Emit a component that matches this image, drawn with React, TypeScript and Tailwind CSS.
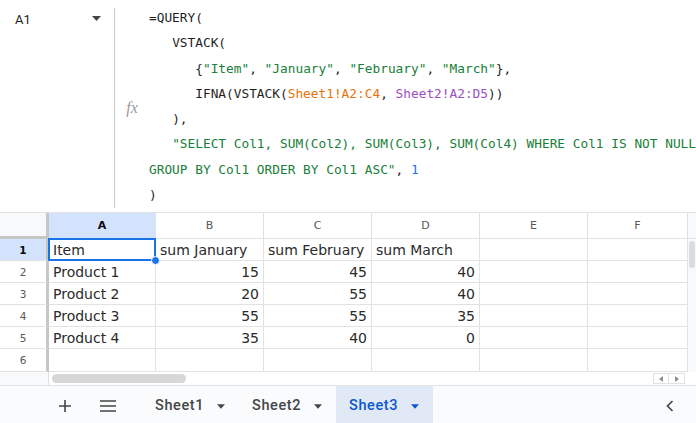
import React from "react";

const G = "text-[#188038]";
const O = "text-[#e8710a]";
const P = "text-[#9a4fc4]";
const B = "text-[#1a73e8]";

const cols = ["A", "B", "C", "D", "E", "F"];
const rows: (string | number)[][] = [
  ["Item", "sum January", "sum February", "sum March", "", ""],
  ["Product 1", 15, 45, 40, "", ""],
  ["Product 2", 20, 55, 40, "", ""],
  ["Product 3", 55, 55, 35, "", ""],
  ["Product 4", 35, 40, 0, "", ""],
  ["", "", "", "", "", ""],
];
const rowH = ["h-[22px]", "h-[22px]", "h-[22px]", "h-[22px]", "h-[22px]", "h-[23px]"];

function Caret({ className = "" }: { className?: string }) {
  return (
    <svg width="9" height="5" viewBox="0 0 9 5" className={className}>
      <path d="M0 0h9L4.5 5z" fill="currentColor" />
    </svg>
  );
}

function Tab({ name, active = false }: { name: string; active?: boolean }) {
  return (
    <div
      className={`w-[97px] flex items-center pl-[13px] gap-[11px] pt-[3px] ${
        active ? "bg-[#e1e9f7] text-[#0b57d0]" : "text-[#444746]"
      }`}
    >
      <span className="w-[51px] tracking-[0.6px]">{name}</span>
      <Caret className="w-[8px]" />
    </div>
  );
}

export default function App() {
  return (
    <div className="w-[696px] h-[423px] bg-white overflow-hidden flex flex-col select-none">
      {/* Formula bar */}
      <div className="h-[213px] flex border-b border-[#e1e3e1] shrink-0">
        <div className="w-[114px] flex items-start justify-between pl-[15px] pr-[13px] pt-[10px]">
          <span className="text-[13px] text-[#1f1f1f] font-['Roboto',sans-serif]">A1</span>
          <Caret className="text-[#444746] mt-[6px]" />
        </div>
        <div className="w-px bg-[#c7c7c7] mt-[8px] mb-[4px]" />
        <div className="w-[34px] flex items-center justify-center pt-[4px]">
          <span className="italic text-[16px] text-[#9a9a9a] font-['Liberation_Serif',serif]">fx</span>
        </div>
        <pre className="flex-1 pt-[5px] text-[12.8px] leading-[25.3px] text-[#1f1f1f] font-['DejaVu_Sans_Mono',monospace] whitespace-pre overflow-hidden">
          <div>=QUERY(</div>
          <div>{"   "}VSTACK(</div>
          <div>
            {"      "}
            <span>{"{"}</span>
            <span className={G}>"Item"</span>, <span className={G}>"January"</span>, <span className={G}>"February"</span>, <span className={G}>"March"</span>
            {"},"}
          </div>
          <div>
            {"      "}IFNA(VSTACK(<span className={O}>Sheet1!A2:C4</span>, <span className={P}>Sheet2!A2:D5</span>))
          </div>
          <div>{"   "}),</div>
          <div>
            {"   "}
            <span className={G}>"SELECT Col1, SUM(Col2), SUM(Col3), SUM(Col4) WHERE Col1 IS NOT NULL</span>
          </div>
          <div>
            <span className={G}>GROUP BY Col1 ORDER BY Col1 ASC"</span>, <span className={B}>1</span>
          </div>
          <div>)</div>
        </pre>
      </div>

      {/* Grid */}
      <div className="grid grid-cols-[49px_107px_108px_108px_108px_108px_100px_8px] font-['DejaVu_Sans',sans-serif]">
        {/* header row */}
        <div className="h-[26px] bg-[#f8f9fa] border-r-[3px] border-b-[3px] border-[#c4c7c5]" />
        {cols.map((c, i) => (
          <div
            key={c}
            className={`h-[26px] flex items-center justify-center pt-[1px] text-[11px] border-r border-b border-[#e1e1e1] ${
              i === 0 ? "bg-[#d3e3fd] text-[#0b0b0b] font-bold" : "bg-white text-[#575757]"
            }`}
          >
            {c}
          </div>
        ))}
        <div className="h-[26px] bg-[#f8f9fa] border-b border-[#e1e1e1]" />

        {rows.map((r, ri) => (
          <React.Fragment key={ri}>
            <div
              className={`${rowH[ri]} flex items-center justify-center pt-[2px] text-[10.5px] border-r-[3px] border-b border-r-[#c4c7c5] border-b-[#e1e1e1] ${
                ri === 0 ? "bg-[#d3e3fd] text-[#0b0b0b] font-bold" : "bg-white text-[#575757]"
              }`}
            >
              {ri + 1}
            </div>
            {r.map((v, ci) => (
              <div
                key={ci}
                className={`${rowH[ri]} relative flex items-center px-[4px] pt-[2px] text-[14px] text-[#2a2a2a] border-r border-b border-[#e2e2e2] whitespace-nowrap ${
                  typeof v === "number" ? "justify-end" : "justify-start"
                }`}
              >
                {ri === 0 && ci === 0 && (
                  <>
                    <div className="absolute -left-px -top-px -right-px -bottom-px border-2 border-[#1a73e8]" />
                    <div className="absolute -right-[5px] -bottom-[5px] w-[9px] h-[9px] rounded-full bg-[#1a73e8] border border-white z-10" />
                  </>
                )}
                <span className="relative">{v}</span>
              </div>
            ))}
            <div className={`${rowH[ri]} bg-[#f8f9fa] relative`}>
              {ri === 0 && <div className="absolute left-[1px] top-[2px] w-[6px] h-[27px] rounded-full bg-[#dadce0] z-10" />}
            </div>
          </React.Fragment>
        ))}
      </div>

      {/* horizontal scrollbar */}
      <div className="h-[14px] flex items-center relative bg-white border-b border-[#e3e3e3]">
        <div className="w-[49px] h-full border-r border-[#e1e1e1] bg-[#f8f9fa]" />
        <div className="ml-[3px] w-[134px] h-[9px] rounded-full bg-[#d7d7d7]" />
        <div className="ml-auto mr-[11px] flex h-[11px]">
          <div className="w-[16px] border border-[#e1e1e1] flex items-center justify-center">
            <svg width="4" height="6" viewBox="0 0 4 6"><path d="M4 0v6L0 3z" fill="#8f8f8f" /></svg>
          </div>
          <div className="w-[16px] border border-l-0 border-[#e1e1e1] flex items-center justify-center">
            <svg width="4" height="6" viewBox="0 0 4 6"><path d="M0 0v6l4-3z" fill="#8f8f8f" /></svg>
          </div>
        </div>
      </div>

      {/* tab bar */}
      <div className="flex-1 flex items-stretch bg-[#f9fbfd] font-['Roboto',sans-serif] text-[14.5px] font-medium text-[#444746]">
        <div className="w-[44px]" />
        <div className="w-[42px] flex items-center justify-center pt-[3px]">
          <svg width="12" height="12" viewBox="0 0 12 12"><path d="M6 0v12M0 6h12" stroke="#444746" strokeWidth="1.6" /></svg>
        </div>
        <div className="w-[44px] flex items-center justify-center pt-[3px]">
          <svg width="16" height="12" viewBox="0 0 16 12"><path d="M0 1h16M0 6h16M0 11h16" stroke="#444746" strokeWidth="1.6" /></svg>
        </div>
        <div className="w-[12px]" />
        <Tab name="Sheet1" />
        <Tab name="Sheet2" />
        <Tab name="Sheet3" active />
        <div className="flex-1" />
        <div className="w-[30px] flex items-center justify-start pt-[3px]">
          <svg width="8" height="12" viewBox="0 0 8 12"><path d="M6.5 1L1.5 6l5 5" stroke="#444746" strokeWidth="1.7" fill="none" /></svg>
        </div>
      </div>
    </div>
  );
}
